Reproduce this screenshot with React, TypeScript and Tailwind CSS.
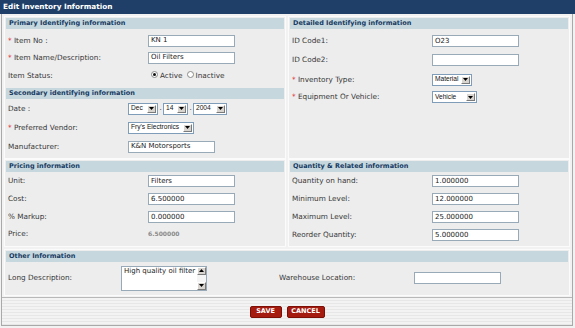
import React from "react";

function Box({ children, className }: { children: React.ReactNode; className: string }) {
  return (
    <div className={`border border-[#fbfbfb] bg-[#ededed] p-[1px] flex flex-col ${className}`}>{children}</div>
  );
}

function Header({ children }: { children: React.ReactNode }) {
  return (
    <div className="h-[11px] shrink-0 bg-[#c6d8dd] flex items-center pl-[3px] text-[6.5px] font-bold text-[#173a63] leading-none whitespace-nowrap">
      {children}
    </div>
  );
}

function Row({
  label,
  req,
  lw,
  h,
  children,
}: {
  label: string;
  req?: boolean;
  lw: string;
  h: string;
  children?: React.ReactNode;
}) {
  return (
    <div className={`flex items-center ${h}`}>
      <div className={`${lw} shrink-0 pl-[2px] text-[7.3px] text-[#383838] leading-none whitespace-nowrap`}>
        {req && <span className="text-[#e0101a]">* </span>}
        {label}
      </div>
      {children}
    </div>
  );
}

function Input({ w, v }: { w: string; v?: string }) {
  return (
    <div
      className={`${w} h-[12px] shrink-0 bg-white border border-[#98a9b8] flex items-center pl-[2px] text-[7px] text-[#222] leading-none whitespace-nowrap`}
    >
      {v}
    </div>
  );
}

function Arrow() {
  return (
    <div className="w-[9px] shrink-0 my-[1px] mr-[1px] bg-[#d8d5d0] border border-t-[#ffffff] border-l-[#ffffff] border-r-[#7a7a7a] border-b-[#7a7a7a] flex items-center justify-center">
      <svg width="5" height="3" viewBox="0 0 5 3">
        <path d="M0 0 L5 0 L2.5 3 Z" fill="#000" />
      </svg>
    </div>
  );
}

function Select({ w, v }: { w: string; v: string }) {
  return (
    <div className={`${w} h-[12px] shrink-0 bg-white border border-[#7f9db9] flex items-stretch`}>
      <div className="flex-1 flex items-center pl-[2px] text-[6.6px] font-['Liberation_Sans',Arial,sans-serif] text-[#111] leading-none whitespace-nowrap overflow-hidden">
        {v}
      </div>
      <Arrow />
    </div>
  );
}

function Radio({ checked }: { checked?: boolean }) {
  return (
    <div className="w-[7px] h-[7px] rounded-full bg-white border border-[#8a8a8a] flex items-center justify-center -mt-[3px]">
      {checked && <div className="w-[3px] h-[3px] rounded-full bg-[#111]" />}
    </div>
  );
}

function Button({ children, w }: { children: React.ReactNode; w: string }) {
  return (
    <div
      className={`${w} h-[12px] rounded-[2px] bg-[#a51b10] border border-[#7d0f07] flex items-center justify-center text-white font-bold text-[6.5px] leading-none`}
    >
      {children}
    </div>
  );
}

export default function App() {
  return (
    <div className="w-[575px] h-[328px] bg-[#f2f2f2] font-['DejaVu_Sans',Verdana,sans-serif] overflow-hidden">
      <div className="h-[14px] bg-[#1f3f68] flex items-center pl-[3px] text-white font-bold text-[7.3px] leading-none">
        Edit Inventory Information
      </div>
      <div className="ml-[1px] w-[572px] border-x border-b border-[#a9a9a9] flex flex-col">
        <div className="px-[2px] pt-[2px] flex flex-col">
          <div className="grid grid-cols-[282px_1fr] gap-x-[2px]">
            <Box className="h-[143px]">
              <Header>Primary Identifying information</Header>
              <div className="pt-[3px] flex flex-col">
                <Row label="Item No :" req lw="w-[142px]" h="h-[17px]">
                  <Input w="w-[87px]" v="KN 1" />
                </Row>
                <Row label="Item Name/Description:" req lw="w-[142px]" h="h-[17px]">
                  <Input w="w-[87px]" v="Oil Filters" />
                </Row>
                <Row label="Item Status:" lw="w-[145px]" h="h-[20px]">
                  <div className="flex items-center text-[7.3px] text-[#383838] leading-none">
                    <Radio checked />
                    <span className="ml-[2px]">Active</span>
                    <div className="ml-[4px]">
                      <Radio />
                    </div>
                    <span className="ml-[2px]">Inactive</span>
                  </div>
                </Row>
              </div>
              <div className="mt-[2px]">
                <Header>Secondary identifying information</Header>
              </div>
              <Row label="Date :" lw="w-[122px]" h="h-[19px]">
                <Select w="w-[30px]" v="Dec" />
                <span className="w-[5px] text-center text-[7px] text-[#333] leading-none">.</span>
                <Select w="w-[25px]" v="14" />
                <span className="w-[5px] text-center text-[7px] text-[#333] leading-none">.</span>
                <Select w="w-[34px]" v="2004" />
              </Row>
              <Row label="Preferred Vendor:" req lw="w-[122px]" h="h-[19px]">
                <Select w="w-[66px]" v="Fry's Electronics" />
              </Row>
              <Row label="Manufacturer:" lw="w-[122px]" h="h-[19px]">
                <Input w="w-[87px]" v="K&N Motorsports" />
              </Row>
            </Box>
            <Box className="h-[143px]">
              <Header>Detailed Identifying information</Header>
              <div className="pt-[3px] flex flex-col">
                <Row label="ID Code1:" lw="w-[142px]" h="h-[18px]">
                  <Input w="w-[87px]" v="O23" />
                </Row>
                <Row label="ID Code2:" lw="w-[142px]" h="h-[20px]">
                  <Input w="w-[87px]" />
                </Row>
                <Row label="Inventory Type:" req lw="w-[142px]" h="h-[19px]">
                  <Select w="w-[40px]" v="Material" />
                </Row>
                <Row label="Equipment Or Vehicle:" req lw="w-[142px]" h="h-[16px]">
                  <Select w="w-[45px]" v="Vehicle" />
                </Row>
              </div>
            </Box>
            <Box className="h-[88px]">
              <Header>Pricing information</Header>
              <Row label="Unit:" lw="w-[142px]" h="h-[18px]">
                <Input w="w-[87px]" v="Filters" />
              </Row>
              <Row label="Cost:" lw="w-[142px]" h="h-[18px]">
                <Input w="w-[87px]" v="6.500000" />
              </Row>
              <Row label="% Markup:" lw="w-[142px]" h="h-[18px]">
                <Input w="w-[87px]" v="0.000000" />
              </Row>
              <Row label="Price:" lw="w-[142px]" h="h-[16px]">
                <span className="text-[6px] font-bold text-[#8a8a8a] leading-none">6.500000</span>
              </Row>
            </Box>
            <Box className="h-[88px]">
              <Header>Quantity &amp; Related information</Header>
              <Row label="Quantity on hand:" lw="w-[142px]" h="h-[18px]">
                <Input w="w-[87px]" v="1.000000" />
              </Row>
              <Row label="Minimum Level:" lw="w-[142px]" h="h-[18px]">
                <Input w="w-[87px]" v="12.000000" />
              </Row>
              <Row label="Maximum Level:" lw="w-[142px]" h="h-[18px]">
                <Input w="w-[87px]" v="25.000000" />
              </Row>
              <Row label="Reorder Quantity:" lw="w-[142px]" h="h-[18px]">
                <Input w="w-[87px]" v="5.000000" />
              </Row>
            </Box>
          </div>
          <Box className="h-[47px] mt-[2px]">
            <Header>Other Information</Header>
            <div className="flex items-center h-[32px]">
              <div className="w-[115px] shrink-0 pl-[2px] text-[7.3px] text-[#383838] leading-none whitespace-nowrap">
                Long Description:
              </div>
              <div className="w-[86px] h-[25px] shrink-0 bg-white border border-[#98a9b8] flex">
                <div className="flex-1 pl-[2px] pt-[1px] text-[7px] text-[#222] leading-none whitespace-nowrap overflow-hidden">
                  High quality oil filter
                </div>
                <div className="w-[9px] flex flex-col justify-between bg-[#f4f4f4]">
                  <div className="h-[8px] bg-[#d8d5d0] border border-t-[#ffffff] border-l-[#ffffff] border-r-[#7a7a7a] border-b-[#7a7a7a] flex items-center justify-center">
                    <svg width="5" height="3" viewBox="0 0 5 3">
                      <path d="M0 3 L5 3 L2.5 0 Z" fill="#000" />
                    </svg>
                  </div>
                  <div className="h-[8px] bg-[#d8d5d0] border border-t-[#ffffff] border-l-[#ffffff] border-r-[#7a7a7a] border-b-[#7a7a7a] flex items-center justify-center">
                    <svg width="5" height="3" viewBox="0 0 5 3">
                      <path d="M0 0 L5 0 L2.5 3 Z" fill="#000" />
                    </svg>
                  </div>
                </div>
              </div>
              <div className="w-[72px] shrink-0" />
              <div className="w-[135px] shrink-0 text-[7.3px] text-[#383838] leading-none whitespace-nowrap">
                Warehouse Location:
              </div>
              <Input w="w-[87px]" />
            </div>
          </Box>
        </div>
        <div className="mt-[1px] h-[28px] border-t border-[#b8b8b8] bg-[repeating-linear-gradient(to_bottom,#f3f3f3_0px,#f3f3f3_2px,#e7e7e7_2px,#e7e7e7_3px)] flex items-center justify-center gap-[5px]">
          <Button w="w-[32px]">SAVE</Button>
          <Button w="w-[38px]">CANCEL</Button>
        </div>
      </div>
    </div>
  );
}
